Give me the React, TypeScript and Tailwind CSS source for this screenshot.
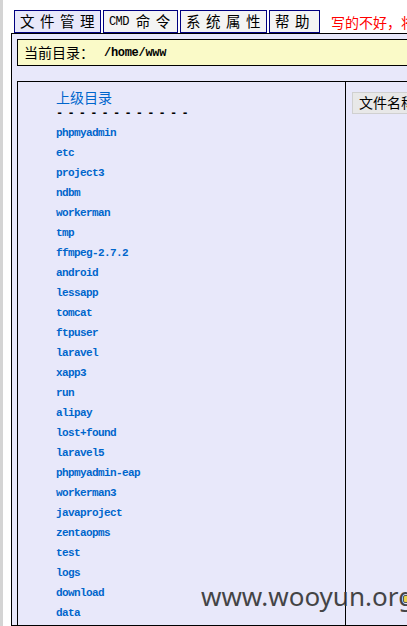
import React from "react";

const dirs = [
  "phpmyadmin",
  "etc",
  "project3",
  "ndbm",
  "workerman",
  "tmp",
  "ffmpeg-2.7.2",
  "android",
  "lessapp",
  "tomcat",
  "ftpuser",
  "laravel",
  "xapp3",
  "run",
  "alipay",
  "lost+found",
  "laravel5",
  "phpmyadmin-eap",
  "workerman3",
  "javaproject",
  "zentaopms",
  "test",
  "logs",
  "download",
  "data",
];

const cjk = "font-['SimSun','Noto_Sans_CJK_SC',sans-serif]";

export default function App() {
  return (
    <div className="relative h-[626px] w-[407px] overflow-hidden bg-white">
      <div className="flex h-full">
        <div className="w-[3px] shrink-0 bg-[#d4d4d4]" />
        <div className="flex min-w-0 flex-1 flex-col pl-[8px]">
          {/* tabs */}
          <div className="ml-[3px] mt-[10px] flex h-[23px] items-stretch gap-[2px]">
            <div className={`flex w-[87px] shrink-0 items-center overflow-hidden whitespace-nowrap border-[1.5px] border-[#000080] bg-[#e8e8fa] pl-[5px] text-[14.5px] leading-none tracking-[5.5px] text-black ${cjk}`}>
              文件管理
            </div>
            <div className={`flex w-[75px] shrink-0 items-center overflow-hidden whitespace-nowrap border-[1.5px] border-[#000080] bg-[#f4f4f4] pl-[5px] text-[14.5px] leading-none text-black ${cjk}`}>
              <span className="font-['Liberation_Mono',monospace] text-[12px] tracking-[-0.6px]">CMD</span>
              <span className="ml-[7px] tracking-[5.5px]">命令</span>
            </div>
            <div className={`flex w-[87px] shrink-0 items-center overflow-hidden whitespace-nowrap border-[1.5px] border-[#000080] bg-[#f4f4f4] pl-[5px] text-[14.5px] leading-none tracking-[5.5px] text-black ${cjk}`}>
              系统属性
            </div>
            <div className={`flex w-[51px] shrink-0 items-center overflow-hidden whitespace-nowrap border-[1.5px] border-[#000080] bg-[#f4f4f4] pl-[5px] text-[14.5px] leading-none tracking-[5.5px] text-black ${cjk}`}>
              帮助
            </div>
            <div className={`ml-[9px] flex shrink-0 items-center whitespace-nowrap text-[14px] leading-none text-[#ff0000] ${cjk}`}>
              写的不好，将就着用吧
            </div>
          </div>
          {/* main container */}
          <div className="-mr-[20px] flex flex-1 flex-col border border-black bg-[#e8e8fa] pl-[5px] pt-[5px]">
            <div className={`flex h-[27px] shrink-0 items-center border border-black bg-[#fafac8] pl-[6px] text-[14px] text-black ${cjk}`}>
              <span>当前目录：</span>
              <span className="ml-[10px] font-['Liberation_Mono',monospace] text-[12px] font-bold tracking-[-0.3px]">/home/www</span>
            </div>
            <div className="mt-[15px] flex flex-1 border-l border-t border-black">
              <div className="w-[328px] shrink-0 border-r border-black pl-[38px] pt-[5px]">
                <div className={`text-[14px] leading-[20px] text-[#0066cc] ${cjk}`}>上级目录</div>
                <div className="whitespace-pre font-['Liberation_Mono',monospace] text-[12px] font-bold leading-[14px] tracking-[-1.5px] text-black">
                  - - - - - - - - - - - -
                </div>
                <div className="mt-[2px] flex flex-col">
                  {dirs.map((d) => (
                    <div
                      key={d}
                      className="h-[20px] font-['Liberation_Mono',monospace] text-[11px] font-bold leading-[20px] tracking-[-0.6px] text-[#0066cc]"
                    >
                      {d}
                    </div>
                  ))}
                </div>
              </div>
              <div className="flex-1 pl-[6px] pt-[8px]">
                <div className={`inline-flex h-[22px] items-center whitespace-nowrap border border-[#d0d0d0] bg-[#e8e8e8] pl-[6px] pr-[4px] text-[14px] text-black ${cjk}`}>
                  文件名称
                </div>
              </div>
            </div>
          </div>
        </div>
      </div>
      {/* watermark */}
      <div className="absolute left-[201px] top-[578px] font-['Noto_Sans',sans-serif] text-[26px] leading-[36px] text-[#333333] opacity-90">
        www.wooyun.org
      </div>
      <div className="absolute left-[403px] top-[595px] h-[8px] w-[8px] rounded-[2px] border border-[#555] bg-[#e8d44a]" />
    </div>
  );
}
